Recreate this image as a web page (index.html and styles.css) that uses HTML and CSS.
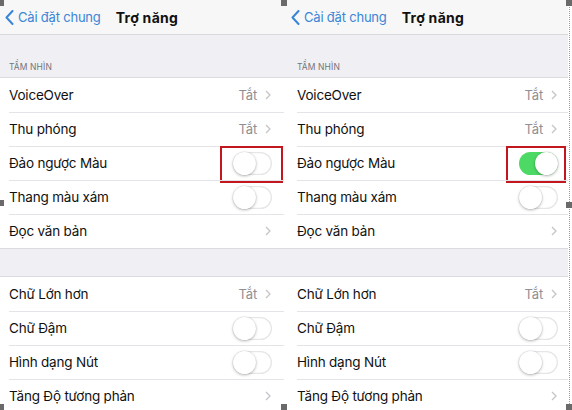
FILE: index.html
```html
<!DOCTYPE html>
<html lang="vi">
<head>
<meta charset="utf-8">
<title>Trợ năng</title>
<link rel="stylesheet" href="styles.css">
</head>
<body>
<div class="canvas">
  <div class="screens">
    <section class="panel panel-a">
      <header class="nav">
        <span class="back">
          <svg class="back-icon" width="9" height="15" viewBox="0 0 9 15"><polyline points="7.5,1 1.5,7.5 7.5,14" fill="none" stroke="#3a86d6" stroke-width="2" stroke-linecap="round" stroke-linejoin="round"/></svg>
          <span class="back-text">Cài đặt chung</span>
        </span>
        <span class="title">Trợ năng</span>
      </header>
      <div class="section-head">TẦM NHÌN</div>
      <ul class="group">
        <li class="row"><span class="label">VoiceOver</span><span class="detail">Tắt</span><svg class="chev" width="6" height="10" viewBox="0 0 6 10"><polyline points="1,1 5,5 1,9" fill="none" stroke="#c4c4c9" stroke-width="1.3"/></svg></li>
        <li class="row"><span class="label">Thu phóng</span><span class="detail">Tắt</span><svg class="chev" width="6" height="10" viewBox="0 0 6 10"><polyline points="1,1 5,5 1,9" fill="none" stroke="#c4c4c9" stroke-width="1.3"/></svg></li>
        <li class="row"><span class="label">Đảo ngược Màu</span><span class="switch-wrap"><span class="switch"></span><span class="mark"></span></span></li>
        <li class="row"><span class="label">Thang màu xám</span><span class="switch"></span></li>
        <li class="row"><span class="label">Đọc văn bản</span><svg class="chev" width="6" height="10" viewBox="0 0 6 10"><polyline points="1,1 5,5 1,9" fill="none" stroke="#c4c4c9" stroke-width="1.3"/></svg></li>
      </ul>
      <div class="gap"></div>
      <ul class="group">
        <li class="row"><span class="label">Chữ Lớn hơn</span><span class="detail">Tắt</span><svg class="chev" width="6" height="10" viewBox="0 0 6 10"><polyline points="1,1 5,5 1,9" fill="none" stroke="#c4c4c9" stroke-width="1.3"/></svg></li>
        <li class="row"><span class="label">Chữ Đậm</span><span class="switch"></span></li>
        <li class="row"><span class="label">Hình dạng Nút</span><span class="switch"></span></li>
        <li class="row"><span class="label">Tăng Độ tương phản</span><svg class="chev" width="6" height="10" viewBox="0 0 6 10"><polyline points="1,1 5,5 1,9" fill="none" stroke="#c4c4c9" stroke-width="1.3"/></svg></li>
      </ul>
    </section>
    <section class="panel panel-b">
      <header class="nav">
        <span class="back">
          <svg class="back-icon" width="9" height="15" viewBox="0 0 9 15"><polyline points="7.5,1 1.5,7.5 7.5,14" fill="none" stroke="#3a86d6" stroke-width="2" stroke-linecap="round" stroke-linejoin="round"/></svg>
          <span class="back-text">Cài đặt chung</span>
        </span>
        <span class="title">Trợ năng</span>
      </header>
      <div class="section-head">TẦM NHÌN</div>
      <ul class="group">
        <li class="row"><span class="label">VoiceOver</span><span class="detail">Tắt</span><svg class="chev" width="6" height="10" viewBox="0 0 6 10"><polyline points="1,1 5,5 1,9" fill="none" stroke="#c4c4c9" stroke-width="1.3"/></svg></li>
        <li class="row"><span class="label">Thu phóng</span><span class="detail">Tắt</span><svg class="chev" width="6" height="10" viewBox="0 0 6 10"><polyline points="1,1 5,5 1,9" fill="none" stroke="#c4c4c9" stroke-width="1.3"/></svg></li>
        <li class="row"><span class="label">Đảo ngược Màu</span><span class="switch-wrap"><span class="switch on"></span><span class="mark"></span></span></li>
        <li class="row"><span class="label">Thang màu xám</span><span class="switch"></span></li>
        <li class="row"><span class="label">Đọc văn bản</span><svg class="chev" width="6" height="10" viewBox="0 0 6 10"><polyline points="1,1 5,5 1,9" fill="none" stroke="#c4c4c9" stroke-width="1.3"/></svg></li>
      </ul>
      <div class="gap"></div>
      <ul class="group">
        <li class="row"><span class="label">Chữ Lớn hơn</span><span class="detail">Tắt</span><svg class="chev" width="6" height="10" viewBox="0 0 6 10"><polyline points="1,1 5,5 1,9" fill="none" stroke="#c4c4c9" stroke-width="1.3"/></svg></li>
        <li class="row"><span class="label">Chữ Đậm</span><span class="switch"></span></li>
        <li class="row"><span class="label">Hình dạng Nút</span><span class="switch"></span></li>
        <li class="row"><span class="label">Tăng Độ tương phản</span><svg class="chev" width="6" height="10" viewBox="0 0 6 10"><polyline points="1,1 5,5 1,9" fill="none" stroke="#c4c4c9" stroke-width="1.3"/></svg></li>
      </ul>
    </section>
    <div class="edge"></div>
  </div>
  <span class="handle h-tl"></span>
  <span class="handle h-tm"></span>
  <span class="handle h-tr"></span>
  <span class="handle h-ml"></span>
  <span class="handle h-mr"></span>
  <span class="handle h-bl"></span>
  <span class="handle h-bm"></span>
  <span class="handle h-br"></span>
</div>
</body>
</html>
```

FILE: styles.css
```css
* { box-sizing: border-box; }
html, body { margin: 0; padding: 0; }
body {
  width: 572px;
  height: 410px;
  overflow: hidden;
  background: #ffffff;
  font-family: Inter, "Noto Sans", "Liberation Sans", sans-serif;
  color: #111111;
}
.canvas {
  position: relative;
  width: 572px;
  height: 410px;
  overflow: hidden;
}
.screens {
  display: flex;
  height: 410px;
}
.panel {
  width: 284px;
  flex: none;
  display: flex;
  flex-direction: column;
  background: #efeff4;
}
.panel-a { --pl: 9px; --pr: 12px; --nl: 5px; }
.panel-b { --pl: 13px; --pr: 10px; --nl: 7px; }
.edge {
  width: 4px;
  flex: none;
  border-left: 1px dotted #9a9a9a;
  margin-left: 1px;
  background: #ffffff;
}
.nav {
  height: 35px;
  flex: none;
  background: #f7f7f7;
  border-bottom: 1px solid #d9d9dc;
  display: flex;
  align-items: center;
  padding-left: var(--nl);
}
.back {
  display: flex;
  align-items: center;
  gap: 4px;
  color: #3a86d6;
  font-size: 13px;
  letter-spacing: -0.2px;
}
.back-icon { display: block; }
.title {
  margin-left: 15px;
  font-weight: 700;
  font-size: 14px;
  letter-spacing: 0.3px;
  color: #111;
}
.section-head {
  height: 43px;
  flex: none;
  display: flex;
  align-items: flex-end;
  padding: 0 0 5px var(--pl);
  font-size: 8.5px;
  color: #74747a;
  letter-spacing: 0.1px;
  border-bottom: 1px solid #dcdce0;
}
.group {
  list-style: none;
  margin: 0;
  padding: 0;
  background: #ffffff;
  flex: none;
}
.row {
  position: relative;
  height: 34px;
  display: flex;
  align-items: center;
  padding: 0 var(--pr) 0 var(--pl);
  font-size: 13.5px;
  letter-spacing: -0.2px;
}
.row + .row::before {
  content: "";
  position: absolute;
  left: var(--pl);
  right: 0;
  top: 0;
  border-top: 1px solid #e4e4e8;
}
.label { flex: 1; white-space: nowrap; }
.detail {
  color: #8f8f94;
  font-size: 13px;
  margin-right: 8px;
}
.chev { display: block; margin-right: 1px; }
.gap {
  height: 29px;
  flex: none;
  border-top: 1px solid #dcdce0;
  border-bottom: 1px solid #dcdce0;
}
.switch {
  position: relative;
  display: block;
  width: 39px;
  height: 23px;
  border-radius: 12px;
  background: #ffffff;
  box-shadow: inset 0 0 0 1.3px #e6e6ea;
}
.switch::after {
  content: "";
  position: absolute;
  left: 0;
  top: 0;
  width: 23px;
  height: 23px;
  border-radius: 50%;
  background: #ffffff;
  box-shadow: 0 1px 3px rgba(0,0,0,0.28), 0 0 0 0.5px rgba(0,0,0,0.08);
}
.switch.on {
  background: #4cd964;
  box-shadow: none;
}
.switch.on::after { left: 16px; }
.switch-wrap { position: relative; display: block; }
.mark {
  position: absolute;
  left: -13px;
  right: -11px;
  top: -6px;
  bottom: -8px;
  border: 2.5px solid #c2171f;
}
.panel-b .mark { right: -8px; }
.handle {
  position: absolute;
  width: 6px;
  height: 6px;
  background: #6a6a6a;
}
.h-tl { left: -2px; top: 0; }
.h-tm { left: 281px; top: 0; }
.h-tr { left: 566px; top: 0; }
.h-ml { left: -2px; top: 200px; }
.h-mr { left: 566px; top: 202px; }
.h-bl { left: -2px; top: 404px; }
.h-bm { left: 281px; top: 404px; }
.h-br { left: 566px; top: 404px; }
```
